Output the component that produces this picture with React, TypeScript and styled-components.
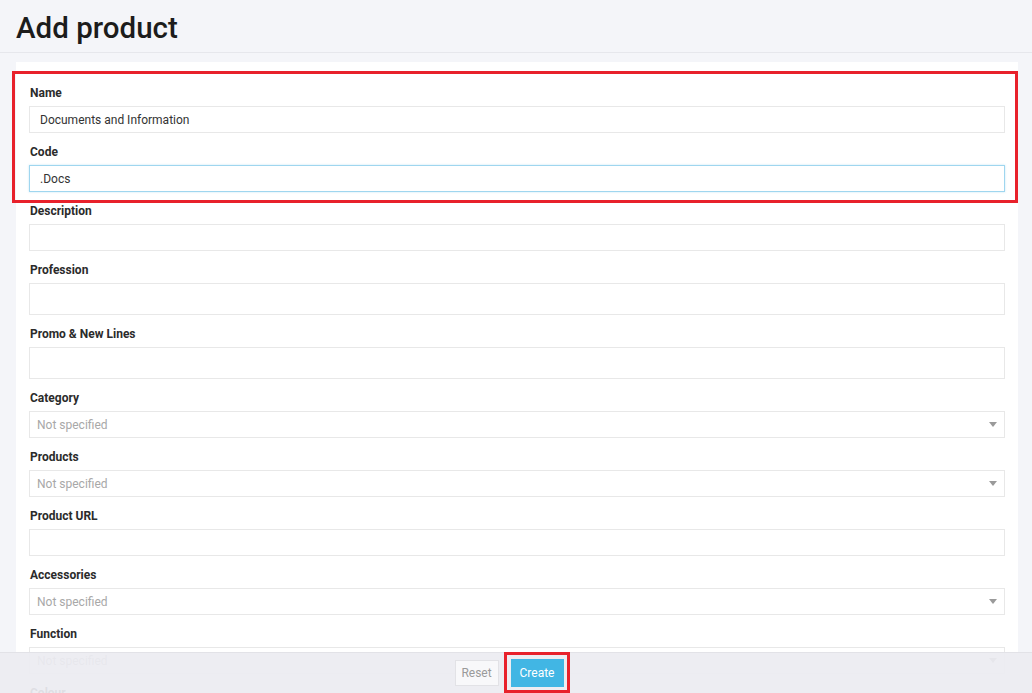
import React from 'react';
import styled, { createGlobalStyle } from 'styled-components';

const GlobalStyle = createGlobalStyle`
  html, body {
    margin: 0;
    padding: 0;
    background: #f4f5f9;
    font-family: Roboto, "Liberation Sans", Arial, sans-serif;
    color: #333;
  }
  * {
    box-sizing: border-box;
  }
`;

type FieldDef = {
  label: string;
  kind: 'text' | 'tall' | 'select';
  value?: string;
  focused?: boolean;
};

const topFields: FieldDef[] = [
  { label: 'Name', kind: 'text', value: 'Documents and Information' },
  { label: 'Code', kind: 'text', value: '.Docs', focused: true },
];

const restFields: FieldDef[] = [
  { label: 'Description', kind: 'text' },
  { label: 'Profession', kind: 'tall' },
  { label: 'Promo & New Lines', kind: 'tall' },
  { label: 'Category', kind: 'select' },
  { label: 'Products', kind: 'select' },
  { label: 'Product URL', kind: 'text' },
  { label: 'Accessories', kind: 'select' },
  { label: 'Function', kind: 'select' },
  { label: 'Colour', kind: 'select' },
];

const Arrow = () => (
  <svg width="8" height="5" viewBox="0 0 8 5">
    <path d="M0 0h8L4 5z" fill="#9a9a9a" />
  </svg>
);

const Field: React.FC<{ field: FieldDef }> = ({ field }) => (
  <FieldRow>
    <Label>{field.label}</Label>
    {field.kind === 'select' ? (
      <Select>
        <Placeholder>Not specified</Placeholder>
        <Arrow />
      </Select>
    ) : (
      <TextInput
        type="text"
        $tall={field.kind === 'tall'}
        $focused={field.focused}
        defaultValue={field.value}
        autoFocus={field.focused}
      />
    )}
  </FieldRow>
);

export default function App() {
  return (
    <>
      <GlobalStyle />
      <Page>
        <Header>
          <Title>Add product</Title>
        </Header>
        <Card>
          <Highlight>
            {topFields.map((f) => (
              <Field key={f.label} field={f} />
            ))}
          </Highlight>
          {restFields.map((f) => (
            <Field key={f.label} field={f} />
          ))}
        </Card>
      </Page>
      <Footer>
        <ResetButton type="button">Reset</ResetButton>
        <CreateWrap>
          <CreateButton type="button">Create</CreateButton>
        </CreateWrap>
      </Footer>
    </>
  );
}

const Page = styled.div`
  min-height: 100vh;
  padding-bottom: 60px;
`;

const Header = styled.header`
  height: 53px;
  border-bottom: 1px solid #e6e7ec;
  padding: 10px 16px 0;
`;

const Title = styled.h1`
  margin: 0;
  font-size: 29.5px;
  font-weight: 500;
  color: #1c1c1c;
  line-height: 36px;
`;

const Card = styled.main`
  margin: 9px 14px 0 16px;
  background: #fff;
  padding: 24px 13px 20px;
  display: flex;
  flex-direction: column;
`;

const Highlight = styled.div`
  position: relative;
  display: flex;
  flex-direction: column;

  &::before {
    content: '';
    position: absolute;
    top: -15px;
    left: -17px;
    right: -13px;
    bottom: 1px;
    border: 3px solid #e8212b;
    pointer-events: none;
  }
`;

const FieldRow = styled.div`
  display: flex;
  flex-direction: column;
  margin-bottom: 12px;
`;

const Label = styled.label`
  font-size: 12px;
  font-weight: 700;
  line-height: 14px;
  color: #2b2b2b;
  padding-left: 1px;
  margin-bottom: 6px;
`;

const TextInput = styled.input<{ $tall?: boolean; $focused?: boolean }>`
  width: 100%;
  height: ${(p) => (p.$tall ? '32px' : '27px')};
  border: 1px solid ${(p) => (p.$focused ? '#9fd6ef' : '#e8e8e8')};
  box-shadow: ${(p) => (p.$focused ? '0 0 2px rgba(80, 180, 230, 0.35)' : 'none')};
  background: #fff;
  padding: 0 10px;
  font-family: Roboto, "Liberation Sans", Arial, sans-serif;
  font-size: 12px;
  color: #333;
  outline: none;
  border-radius: 0;
  caret-color: #333;
`;

const Select = styled.div`
  height: 27px;
  border: 1px solid #e8e8e8;
  background: #fff;
  display: flex;
  align-items: center;
  justify-content: space-between;
  padding: 0 7px 0 7px;
`;

const Placeholder = styled.span`
  font-size: 12px;
  color: #a8a8a8;
`;

const Footer = styled.footer`
  position: fixed;
  left: 0;
  right: 0;
  bottom: 0;
  height: 41px;
  background: rgba(236, 236, 241, 0.93);
  border-top: 1px solid #e2e2e7;
  display: flex;
  align-items: center;
  justify-content: center;
  gap: 12px;
  padding-right: 14px;
`;

const ResetButton = styled.button`
  width: 44px;
  height: 26px;
  background: #f8f8fa;
  border: 1px solid #e2e2e6;
  color: #9a9a9a;
  font-family: Roboto, "Liberation Sans", Arial, sans-serif;
  font-size: 12px;
  padding: 0;
  border-radius: 0;
`;

const CreateWrap = styled.div`
  position: relative;
  display: flex;

  &::before {
    content: '';
    position: absolute;
    top: -7px;
    left: -7px;
    right: -6px;
    bottom: -6px;
    border: 3px solid #e8212b;
    pointer-events: none;
  }
`;

const CreateButton = styled.button`
  width: 53px;
  height: 28px;
  background: #41b6e4;
  border: none;
  color: #fff;
  font-family: Roboto, "Liberation Sans", Arial, sans-serif;
  font-size: 12px;
  padding: 0;
  border-radius: 0;
`;
